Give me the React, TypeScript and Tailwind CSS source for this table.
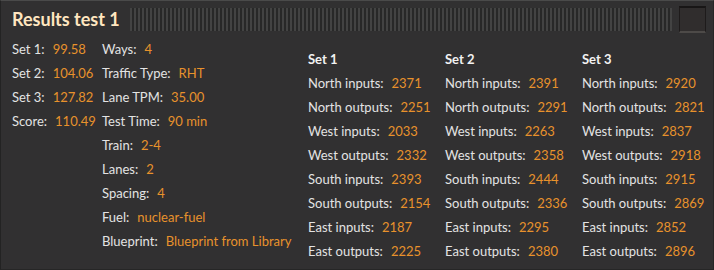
import React from "react";

const Row = ({ label, value }: { label: string; value: string }) => (
  <div className="flex h-[24px] items-center whitespace-nowrap">
    <span className="text-[#e3e3e3]">{label}</span>
    <span className="ml-[8px] text-[#e8922c]">{value}</span>
  </div>
);

const sets = [
  { name: "Set 1", v: ["2371", "2251", "2033", "2332", "2393", "2154", "2187", "2225"] },
  { name: "Set 2", v: ["2391", "2291", "2263", "2358", "2444", "2336", "2295", "2380"] },
  { name: "Set 3", v: ["2920", "2821", "2837", "2918", "2915", "2869", "2852", "2896"] },
];
const labels = [
  "North inputs:",
  "North outputs:",
  "West inputs:",
  "West outputs:",
  "South inputs:",
  "South outputs:",
  "East inputs:",
  "East outputs:",
];

export default function App() {
  return (
    <div
      className="w-[714px] h-[270px] bg-[#313031] border-t border-t-[#4a4a4a] border-l border-l-[#232323] border-r border-r-[#262626] border-b border-b-[#262626] text-[13px] overflow-hidden"
      style={{ fontFamily: "Lato, 'Noto Sans', sans-serif" }}
    >
      <div className="flex items-center h-[36px] pl-[11px] pr-[7px]">
        <span className="font-bold text-[18px] text-[#ffe6c0] whitespace-nowrap">Results test 1</span>
        <div className="ml-[10px] flex-1 h-[23px] bg-[repeating-linear-gradient(90deg,#434343_0px,#434343_2px,#282828_2px,#282828_4px)]" />
        <div className="ml-[7px] w-[27px] h-[27px] bg-[#302d2d] border-t-2 border-t-[#181616] border-l border-l-[#1e1b1b] border-r border-r-[#1e1b1b] border-b-2 border-b-[#4d4a48]" />
      </div>
      <div className="flex pl-[11px] pt-[1px]">
        <div className="flex w-[296px] shrink-0">
          <div className="w-[90px] shrink-0">
            <Row label="Set 1:" value="99.58" />
            <Row label="Set 2:" value="104.06" />
            <Row label="Set 3:" value="127.82" />
            <Row label="Score:" value="110.49" />
          </div>
          <div>
            <Row label="Ways:" value="4" />
            <Row label="Traffic Type:" value="RHT" />
            <Row label="Lane TPM:" value="35.00" />
            <Row label="Test Time:" value="90 min" />
            <Row label="Train:" value="2-4" />
            <Row label="Lanes:" value="2" />
            <Row label="Spacing:" value="4" />
            <Row label="Fuel:" value="nuclear-fuel" />
            <Row label="Blueprint:" value="Blueprint from Library" />
          </div>
        </div>
        <div className="flex pt-[10px] shrink-0">
          {sets.map((s) => (
            <div key={s.name} className="w-[137px] shrink-0">
              <div className="h-[24px] flex items-center font-bold text-[#f2f2f2]">{s.name}</div>
              {labels.map((l, i) => (
                <Row key={l} label={l} value={s.v[i]} />
              ))}
            </div>
          ))}
        </div>
      </div>
    </div>
  );
}
